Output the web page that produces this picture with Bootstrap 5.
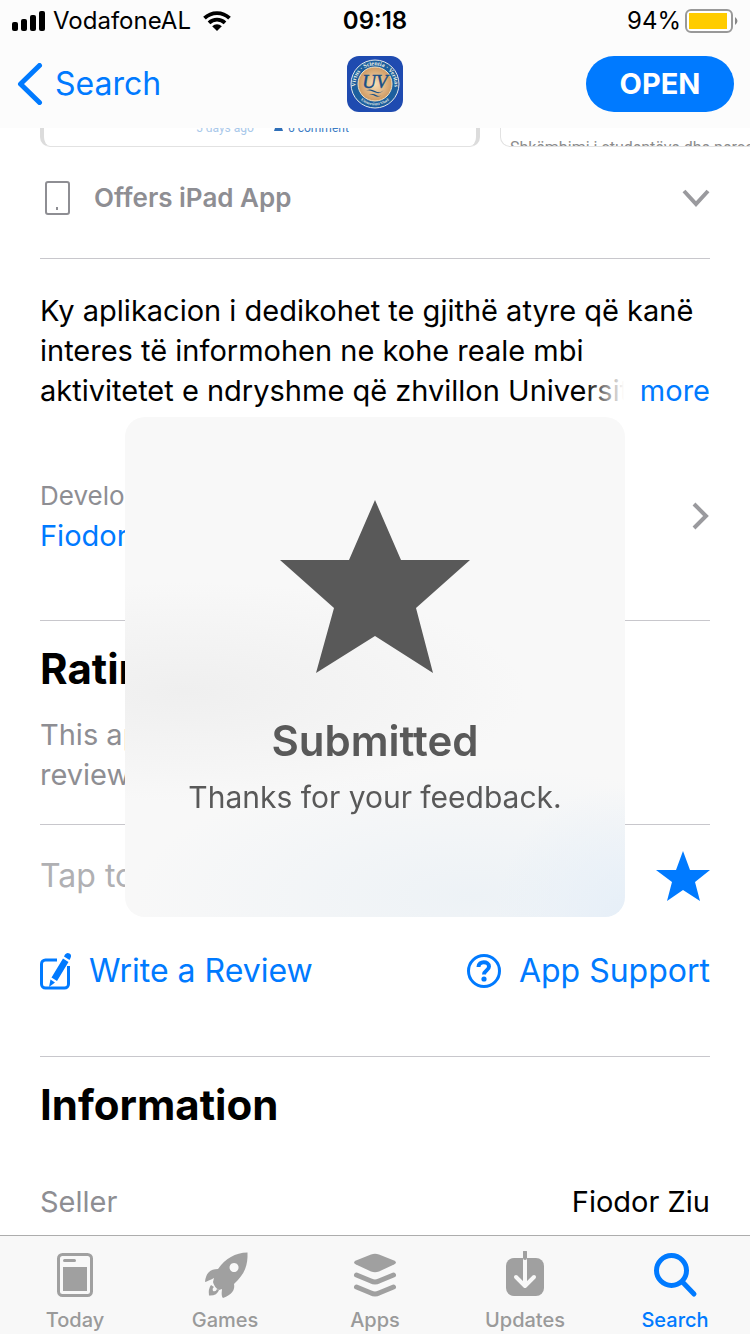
<!DOCTYPE html>
<html lang="en">
<head>
<meta charset="utf-8">
<meta name="viewport" content="width=device-width, initial-scale=1">
<title>App Store</title>
<link rel="stylesheet" href="https://cdn.jsdelivr.net/npm/bootstrap@5.3.0/dist/css/bootstrap.min.css">
<style>
  :root { --ios-blue: #007aff; --ios-gray: #8e8e93; --hairline: #c8c7cc; --gutter: 40px; }
  body { font-family: Inter, "Liberation Sans", sans-serif; font-size: 29px; line-height: 40px; color: #000; background: #fff; }
  a { color: var(--ios-blue); text-decoration: none; }
  svg { display: block; flex: none; }
  button { font: inherit; }
  .ink-gray { color: var(--ios-gray); }

  .top-chrome { background: #fcfcfc; height: 128px; }
  .status-row { height: 42px; font-size: 24px; padding: 0 12px; }
  .status-row > div { flex: 1 1 0; }
  .carrier { gap: 8px; }
  .wifi { margin-left: 4px; }
  .nav-row { height: 84px; padding: 0 16px; }
  .nav-row > div { flex: 1 1 0; }
  .nav-back { font-size: 32px; gap: 12px; }
  .btn-open { background: var(--ios-blue); color: #fff; width: 148px; height: 56px; border: 0; border-radius: 28px; font-size: 29px; font-weight: 700; }

  .page-body { padding: 128px 0 113px; }
  .shot-strip { height: 20px; gap: 20px; padding-left: var(--gutter); font-family: Roboto, "Liberation Sans", sans-serif; font-size: 16px; line-height: 20px; }
  .shot { flex: none; width: 440px; border: 1px solid #e2e2e2; border-top: 0; border-radius: 0 0 10px 10px; height: 19px; }
  .shot-framed { border-left: 4px solid #dcdcdc; border-right: 4px solid #dcdcdc; font-size: 12px; line-height: 0; color: #3c7cc4; padding-left: 152px; }
  .shot-faded { color: #a9c8ea; width: 78px; }
  .shot-comment { gap: 5px; }
  .shot-page { color: #8c8c8c; padding: 10px 0 0 9px; border-right: 0; }

  .sheet { margin: 0 var(--gutter); }
  .sheet + .sheet { border-top: 1px solid var(--hairline); }
  .offers { padding: 30px 0 40px; font-size: 26px; font-weight: 600; }
  .about { padding: 32px 0 64px; }
  .about-text { height: 120px; overflow: hidden; }
  .about-more { right: 0; bottom: 0; padding-left: 56px; background: linear-gradient(90deg, #fff0, #fff 40px); }
  .maker { margin-top: 65px; }
  .maker-label { font-size: 26px; }
  .section-title { font-size: 42px; line-height: 52px; font-weight: 700; margin: 0; }
  .ratings { padding: 22px 0 29px; }
  .rate { padding: 25px 0 65px; }
  .rate-row { height: 52px; }
  .rate-label { font-size: 32px; color: #b0b0b3; }
  .rate-actions { margin-top: 49px; font-size: 32px; }
  .rate-actions a { gap: 17px; }
  .info { padding-top: 22px; }
  .info-row { margin-top: 51px; }

  .hud { top: 50%; left: 50%; transform: translate(-50%, -50%); width: 500px; height: 500px; border-radius: 20px; padding-top: 83px; color: #595959; z-index: 1040;
    background: radial-gradient(circle at 100% 100%, #e6eff8, #e6eff800 130px), radial-gradient(ellipse 340px 130px at 70% 96%, #edf2f6, #edf2f600), radial-gradient(ellipse 340px 110px at 12% 55%, #efefef, #efefef00), #f8f8f8; }
  .hud-title { font-size: 42px; line-height: 52px; font-weight: 600; margin-top: 42px; }
  .hud-note { font-size: 30px; margin-top: 10px; }

  .tab-bar { background: #f8f8f8; border-top: 1px solid #adadad; height: 99px; font-size: 20px; line-height: 24px; font-weight: 500; }
  .tab-bar a { flex: 1 1 0; gap: 9px; padding-top: 15px; color: #9a9a9a; }
  .tab-bar a.active { color: var(--ios-blue); }
</style>
</head>
<body>

<header class="top-chrome fixed-top">
  <div class="status-row d-flex align-items-center">
    <div class="carrier d-flex align-items-center">
      <svg width="33" height="20" viewBox="0 0 33 20"><rect y="11" width="6" height="9" rx="2"/><rect x="9" y="8" width="6" height="12" rx="2"/><rect x="18" y="4" width="6" height="16" rx="2"/><rect x="27" width="6" height="20" rx="2"/></svg>
      <span>VodafoneAL</span>
      <svg class="wifi" width="28" height="20" viewBox="0 0 28 20"><g fill="none" stroke="#000" stroke-width="3.8"><path d="M1.500 7.200a18 18 0 0 1 25 0"/><path d="M6 11.800a11.600 11.600 0 0 1 16 0"/></g><path d="M9.200 15.200a7 7 0 0 1 9.600 0L14 20z"/></svg>
    </div>
    <span class="fw-semibold">09:18</span>
    <div class="d-flex align-items-center justify-content-end">
      <span class="me-1">94%</span>
      <svg width="53" height="24" viewBox="0 0 53 24"><rect x="1" y="1" width="46" height="22" rx="5" fill="#fff" stroke="#999" stroke-width="2"/><rect x="4" y="4" width="38" height="16" fill="#fc0"/><path d="M50 8q5 4 0 8z" fill="#888"/></svg>
    </div>
  </div>
  <nav class="nav-row d-flex align-items-center">
    <div class="d-flex"><a href="#" class="nav-back d-flex align-items-center">
      <svg width="27" height="42" viewBox="0 0 27 42"><path d="M23.500 2.500L4.500 21l19 18.500" fill="none" stroke="#007aff" stroke-width="5" stroke-linecap="round" stroke-linejoin="round"/></svg>Search</a></div>
    <svg width="56" height="56" viewBox="0 0 56 56">
      <defs><radialGradient id="gold"><stop offset="0" stop-color="#f8dfb8"/><stop offset="1" stop-color="#cf9a62"/></radialGradient><path id="arcTop" d="M9.500 35a19.500 19.500 0 1 1 37 0"/><path id="arcLow" d="M11 41a21.500 21.500 0 0 0 34 0"/></defs>
      <rect width="56" height="56" rx="12" fill="#1f4bb0"/>
      <circle cx="28" cy="28" r="24" fill="#1c5f9e" stroke="#e5e9ea" stroke-width="1"/>
      <g fill="#f1f1e6" font-family="Liberation Serif, serif" font-weight="700" text-anchor="middle"><text font-size="6"><textPath href="#arcTop" startOffset="50%">Virtus · Scientia · Veritas</textPath></text><text font-size="4"><textPath href="#arcLow" startOffset="50%">Universiteti Vlorë</textPath></text></g>
      <circle cx="28" cy="28" r="17" fill="url(#gold)" stroke="#f3e3c6"/>
      <text x="28" y="32" text-anchor="middle" font-family="Liberation Serif, serif" font-style="italic" font-size="19" fill="#184f86" stroke="#184f86" stroke-width=".5">UV</text>
      <path d="M18 35q5-3 10 0t9-1q-4 5-10 2t-9-1zM22 39q4-2 7 0t6 0q-4 3-7 1t-6-1z" fill="#184f86"/>
    </svg>
    <div class="d-flex justify-content-end"><button type="button" class="btn-open">OPEN</button></div>
  </nav>
</header>

<main class="page-body">
  <div class="shot-strip d-flex overflow-hidden">
    <div class="shot shot-framed d-flex"><span class="shot-faded">5 days ago</span><span class="shot-comment d-flex"><svg width="9" height="3" viewBox="0 0 9 3"><path d="M1 0h7l1 3H0z" fill="#2f6fb8"/></svg>6 comment</span></div>
    <div class="shot shot-page text-nowrap overflow-hidden">Shkëmbimi i studentëve dhe personelit</div>
  </div>

  <section class="sheet offers ink-gray d-flex align-items-center">
    <svg width="54" height="34" viewBox="0 0 54 34"><rect x="6" y="1" width="23" height="32" rx="2" fill="none" stroke="#8e8e93" stroke-width="2"/><rect x="16" y="26" width="2" height="3" fill="#8e8e93"/></svg>
    <span>Offers iPad App</span>
    <svg class="ms-auto" width="28" height="18" viewBox="0 0 28 18"><path d="M2 2l12 13L26 2" fill="none" stroke="#9a9a9e" stroke-width="4"/></svg>
  </section>

  <section class="sheet about">
    <div class="about-text position-relative">Ky aplikacion i dedikohet te gjithë atyre që kanë<br>interes të informohen ne kohe reale mbi<br><span class="text-nowrap">aktivitetet e ndryshme që zhvillon Universit</span><a href="#" class="about-more position-absolute">more</a></div>
    <div class="maker d-flex align-items-center justify-content-between">
      <div><div class="maker-label ink-gray">Developer</div><a href="#" class="d-block">Fiodor Ziu</a></div>
      <svg width="18" height="28" viewBox="0 0 18 28"><path d="M2 2l12 12L2 26" fill="none" stroke="#9a9a9e" stroke-width="4"/></svg>
    </div>
  </section>

  <section class="sheet ratings">
    <h2 class="section-title">Ratings</h2>
    <p class="ink-gray mb-0 mt-3 pt-1">This app<br>reviews</p>
  </section>

  <section class="sheet rate">
    <div class="rate-row d-flex align-items-center justify-content-between">
      <span class="rate-label">Tap to Rate</span>
      <button type="button" class="btn p-0 border-0" aria-label="Rate"><svg width="54" height="52" viewBox="0 0 54 52"><path d="M27 1l7 19h20L39 32l5 19-17-11-16 11 5-19L0 20h20z" fill="#007aff"/></svg></button>
    </div>
    <div class="rate-actions d-flex justify-content-between">
      <a href="#" class="d-flex align-items-center"><svg width="32" height="38" viewBox="0 0 32 38"><path d="M17 8H5.500a4 4 0 0 0-4 4v20a4 4 0 0 0 4 4h19a4 4 0 0 0 4-4V14" fill="none" stroke="#007aff" stroke-width="3"/><path d="M25 2.500q2-2.500 4.500-1t1 4.500l-1 2-5.500-3.500zM23 6.500l5.500 3.500L17 29l-5.500-3.500zM10.500 27.500l4.500 3L9 35z" fill="#007aff"/></svg>Write a Review</a>
      <a href="#" class="d-flex align-items-center"><svg width="36" height="36" viewBox="0 0 36 36"><circle cx="18" cy="18" r="15.500" fill="none" stroke="#007aff" stroke-width="3"/><path d="M12.500 14C12.500 7.500 23 8 23 13.500c0 4-5 4-5 8" fill="none" stroke="#007aff" stroke-width="4"/><circle cx="18" cy="26" r="2.600" fill="#007aff"/></svg>App Support</a>
    </div>
  </section>

  <section class="sheet info">
    <h2 class="section-title">Information</h2>
    <div class="info-row d-flex justify-content-between"><span class="ink-gray">Seller</span><span>Fiodor Ziu</span></div>
  </section>
</main>

<div class="hud position-fixed d-flex flex-column align-items-center" role="status">
  <svg width="190" height="173" viewBox="0 0 190 173"><path d="M95 0l26 60h69l-54 48 17 65-58-37-59 37 18-65L0 60h69z" fill="#595959"/></svg>
  <div class="hud-title">Submitted</div>
  <div class="hud-note">Thanks for your feedback.</div>
</div>

<nav class="tab-bar fixed-bottom d-flex">
  <a href="#" class="d-flex flex-column align-items-center">
    <svg width="48" height="48" viewBox="0 0 48 48"><rect x="7.500" y="3.500" width="33" height="41" rx="4" fill="none" stroke="#a0a0a0" stroke-width="3"/><path d="M13.500 9.500h10" stroke="#a0a0a0" stroke-width="3" stroke-linecap="round"/><path d="M12 16h24v24H12z" fill="#a0a0a0"/></svg>Today</a>
  <a href="#" class="d-flex flex-column align-items-center">
    <svg width="48" height="48" viewBox="0 0 48 48"><path fill="#a0a0a0" fill-rule="evenodd" d="M46.500 1.500C47 14 44 23 33 33q2 9-11 14-2-1-1-9l-3 1q-5-3-6-8l1-4q-6 3-9 4 1-13 13-13Q28 2 46.500 1.500zM33 12a4.500 4.500 0 1 0 .1 0z"/><path fill="#a0a0a0" d="M10 34q-3 4-2 10.500 8 .5 10-5.500l-2-1q-1 3-4 2-1-3 1-4z"/></svg>Games</a>
  <a href="#" class="d-flex flex-column align-items-center">
    <svg width="48" height="48" viewBox="0 0 48 48"><path d="M20 3.500q4-1.500 8 0l15 6q4 2 0 4l-15 7q-4 1.500-8 0l-15-7q-4-2 0-4z" fill="#a0a0a0"/><path d="M5.500 24L20 30q4 2 8 0l14.500-6M5.500 36L20 42q4 2 8 0l14.500-6" fill="none" stroke="#a0a0a0" stroke-width="5" stroke-linecap="round"/></svg>Apps</a>
  <a href="#" class="d-flex flex-column align-items-center">
    <svg width="48" height="48" viewBox="0 0 48 48"><rect x="5" y="7" width="38" height="38" rx="8" fill="#a0a0a0"/><path d="M24 7v27M15 26l9 9 9-9" fill="none" stroke="#f8f8f8" stroke-width="4" stroke-linecap="round" stroke-linejoin="round"/><path d="M24 7V1" stroke="#a0a0a0" stroke-width="4" stroke-linecap="round"/></svg>Updates</a>
  <a href="#" class="active d-flex flex-column align-items-center">
    <svg width="48" height="48" viewBox="0 0 48 48"><circle cx="20.500" cy="19.500" r="15" fill="none" stroke="#007aff" stroke-width="5"/><path d="M31.500 31L43 43" stroke="#007aff" stroke-width="5" stroke-linecap="round"/></svg>Search</a>
</nav>
<script src="https://cdn.jsdelivr.net/npm/bootstrap@5.3.0/dist/js/bootstrap.bundle.min.js"></script>
</body>
</html>
